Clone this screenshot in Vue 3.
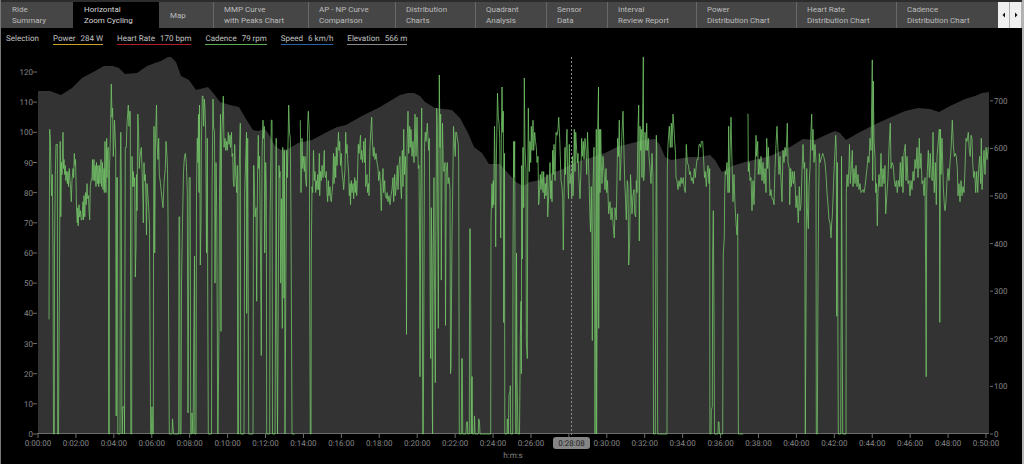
<script setup>
import { ref } from 'vue'

const tabs = [
  { lines: ['Ride', 'Summary'], grow: 61 },
  { lines: ['Horizontal', 'Zoom Cycling'], grow: 75 },
  { lines: ['Map'], grow: 43 },
  { lines: ['MMP Curve', 'with Peaks Chart'], grow: 84 },
  { lines: ['AP - NP Curve', 'Comparison'], grow: 76 },
  { lines: ['Distribution', 'Charts'], grow: 69 },
  { lines: ['Quadrant', 'Analysis'], grow: 60 },
  { lines: ['Sensor', 'Data'], grow: 50 },
  { lines: ['Interval', 'Review Report'], grow: 78 },
  { lines: ['Power', 'Distribution Chart'], grow: 89 },
  { lines: ['Heart Rate', 'Distribution Chart'], grow: 89 },
  { lines: ['Cadence', 'Distribution Chart'], grow: 91 }
]
const active = ref(1)

const metrics = [
  { name: 'Power', value: '284 W', tone: 'power' },
  { name: 'Heart Rate', value: '170 bpm', tone: 'heart' },
  { name: 'Cadence', value: '79 rpm', tone: 'cadence' },
  { name: 'Speed', value: '6 km/h', tone: 'speed' },
  { name: 'Elevation', value: '566 m', tone: 'elevation' }
]

const baseY = 434
const rpmY = v => +(baseY - v * 3.017).toFixed(1)
const leftTicks = Array.from({ length: 13 }, (_, i) => ({ label: i * 10, y: rpmY(i * 10) }))
const rightTicks = Array.from({ length: 8 }, (_, i) => ({ label: i * 100, y: baseY - i * 47.6 }))
const timeTicks = Array.from({ length: 26 }, (_, i) => ({
  label: `0:${String(i * 2).padStart(2, '0')}:00`,
  x: 38 + i * 37.92,
  hidden: i === 14
}))

const elevation = `38,91 50,91 61,95 72,88 82,78 95,71 104,66 113,66 119,68 125,74 137,73 147,66 155,63 161,61
168,57 171,57 176,62 181,76 189,80 196,90 208,87 214,94 220,102 230,105 239,107 246,119 253,130 258,131 265,129
268,133 275,146 281,150 288,149 298,143 312,140 325,133 337,127 346,125 360,117 380,107 400,95 408,93 414,93
420,96 425,102 435,108 452,110 460,118 468,133 474,147 482,153 489,164 500,164 507,172 516,182 523,186 530,182
540,180 550,174 565,168 573,163 590,158 605,153 617,147 632,143 645,140 655,139 660,145 665,157 671,160 690,157
700,157 710,155 715,160 722,172 732,166 745,162 770,156 790,147 803,139 815,140 830,133 835,131 840,133 846,140
860,132 880,122 905,111 918,108 930,109 939,112 950,106 965,99 975,96 982,93 989,92`

/* Cadence samples as "x,rpm"; a slash marks a gap in the recording. */
const cadence = `49,38 49.7,101 50.3,98 51.5,79 52.3,86 53,60 53.5,0 54.3,0 54.5,60 55.3,86 56,96 57.3,96 57.7,0
58.5,0 58.8,20 59.5,52 60.2,97 60.8,72 61.5,90 62,86 63,100 63.5,88 64,91 64.7,86 65.3,89 65.8,84 66.5,87
67.3,83 68,87 68.5,82 69.3,88 70,84 70.7,81 71.3,77 72,84 73,88 73.7,85 74.3,93 75,89 75.5,91 76,84 76.5,75
77.3,70 77.7,75 78.2,69 79,76 79.7,72 80.5,74 81.2,71 82,71 83,77 83.5,71 84,79 84.8,72 85.5,80 86.2,76 87,83
87.7,78 88.5,79 89,74 89.7,71 90.3,82 91,84 92,85 92.5,91 93,84 94,91 94.5,84 95.2,89 96,82 96.5,90 97.5,83
98,89 98.7,82 99.3,89 100,83 101,91 101.5,82 102.5,90 103,81 104,88 104.3,80 105,97 105.5,83 106,80 106.7,98
107,85 107.5,94 108.3,95 108.7,0 109.3,0 109.5,88 110.5,100 111.3,116 112,105 112.6,108 113.3,92 114,98
114.5,104 115,100 115.7,94 116.2,6 116.7,85 117.5,85 117.8,0 120,0 120.3,90 120.8,100 121.3,84 121.8,9 122.3,0
122.7,9 124.3,9 124.5,0 125.3,95 126.3,95 127,103 127.7,106 128.3,109 129,102 129.7,107 130.3,107 130.8,0
131.7,0 132,92 132.7,82 133.3,87 134,82 134.7,85 135.3,52 136,62 136.5,86 137,74 137.8,106 138.5,101 139.3,88
140,92 141.3,95 142,88 143,76 143.3,70 144,90 144.5,84 145.3,86 146,77 146.5,66 147,83 147.7,80 148.7,75
149.5,69 150,35 150.7,0 151.3,0 152,9 152.7,0 153.3,0 153.5,60 154,102 154.7,60 155.5,98 156.5,109 157,97
158,91 158.7,98 159.3,86 160.5,83 161,81 162,78 163,75 164,83 165.3,88 166,97 167,92 167.5,88 168,73 168.7,35
169.3,0 172,0 172.5,5 173.5,0 178.7,0 179,72 179.7,72 180,0 181,0 181.5,50 182.5,70 183.5,87 184.5,92 185.3,93
186.3,90 187.3,80 188,7 188.5,40 189.2,85 190.2,85 190.7,0 191.7,0 192,7 193,0 194.5,59 194.8,0 196,0 196.5,80
197.3,98 198,90 198.5,106 199,80 199.5,109 200.3,56 201,70 201.3,95 202.3,112 203,112 203.7,102 204.3,111
205,108 205.7,100 206.5,60 207.3,98 207.7,50 208.3,0 211.5,0 212,80 213,111 213.5,102 214.5,100 215,50 216,90
216.7,75 217.3,36 217.7,0 218,0 219,37 219.5,80 220.5,106 221,34 221.5,95 222,101 223.3,112 224,95 225,98
225.8,94 226.5,97 227.3,94 228.3,100 229,96 230,99 230.5,95 231.5,100 232,92 232.7,93 233.3,84 234,82 234.7,96
235.5,87 236,84 236.7,80 237.3,89 237.7,0 238.5,0 239,85 240.3,103 240.7,0 244,0 244.7,80 246.5,100 246.7,40
247.7,98 248.3,40 248.7,0 253,0 253.5,89 254,89 255,72 256,75 256.7,44 257.5,85 258.3,99 258.7,88 259.5,92
260.5,60 261.3,26 262,92 263,104 263.5,98 264.3,102 264.7,60 265.7,90 266.3,82 266.7,0 269.7,0 270,70
271.3,104 272,104 272.5,0 275,0 275.8,60 276.2,98 276.7,40 277.5,0 279,89 279.7,85 280,87 280.7,50 281.5,78
282.3,35 282.7,95 283.3,93 284,45 284.5,94 285,0 286,60 286.7,94 287.3,85 288,96 288.7,109 289.5,100 290.3,98
291,70 292,0 294.7,0 / 300.3,104 301,80 302,98 302.7,88 303.3,92 304.3,87 305,92 305.7,84 306.5,82 307.7,103
308.3,107 309.3,100 309.7,50 310.3,0 311,0 311.3,60 312,82 312.7,80 313.5,94 314.3,84 315,87 315.7,80 316.3,84
317,81 317.7,86 318.5,81 319.3,93 319.7,79 320.5,87 321.3,84 322,89 323,85 324.3,94 324.7,86 325.5,85 326.3,87
327,80 327.7,77 328.3,84 329,79 330,82 330.5,78 331.3,77 332,80 332.7,82 333.5,93 334,83 335,92 335.7,85
336.3,95 337,89 338.5,100 339,94 339.7,97 340.5,89 341.3,93 342,87 343,84 343.7,81 345,88 345.7,100 346.3,93
347,96 347.7,91 348.7,86 349.3,79 350,83 350.5,76 351.3,84 352,80 353,83 353.7,78 354.7,85 355.3,80 356,84
356.7,79 357.3,83 358.3,96 359,93 360.5,99 361,91 361.7,94 362.5,90 363.3,93 363.7,97 364.5,90 365.3,98
365.7,82 367,86 367.5,80 368.5,83 369,79 370,95 370.7,100 371.7,105 372.3,98 373.3,92 374,95 375,91 376,93
377,90 378,88 378.7,84 379.7,87 380.5,82 381.3,74 382,82 383,88 383.7,80 384.7,84 385.3,79 386.5,78 387,80
388,77 389,79 390,76 391,79 392,81 393,85 393.7,77 394.7,86 395.3,79 396.3,82 397.3,89 398,81 399,89 400,92
400.7,82 401.5,78 402.3,94 403,82 403.7,101 404.5,86 405.3,92 406,85 406.5,33 407,95 408,107 408.7,93 409.7,102
410.3,95 411,101 412,92 413,97 414,90 415,106 416,92 417,105 417.7,95 418.3,88 419,89 419.7,55 420,19 420.7,75
421.7,108 422.3,60 422.7,0 423.3,0 424,55 424.5,95 425.3,100 426,97 427.3,103 428,98 428.7,94 429.3,98 429.7,80
430.3,37 430.7,25 431.3,75 432,55 432.3,8 432.6,0 433,55 434,85 434.3,55 434.7,46 435.3,17 435.7,60 436.7,108
437.3,102 438.3,35 439.3,119 440,95 440.7,106 441.3,51 441.7,75 442.5,103 443.3,88 444,87 445,90 445.5,36
446.3,87 447.3,90 448,83 449,85 450,81 450.5,20 451,22 452,65 452.7,80 453.5,102 454.3,97 455.3,92 455.7,100
456.5,100 457.3,98 458.3,96 458.7,90 459,45 459.3,0 461.3,0 461.7,25 462.3,25 462.7,0 466,0 466.5,4 467.5,4
467.7,0 469.3,0 469.7,68 470.3,68 470.7,44 471.3,0 471.7,19 472.3,19 472.5,0 474,0 474.5,6 475,0 478.3,0
478.7,5 479.5,4 480,0 490.7,0 491,70 492,83 492.7,75 493.3,84 493.7,76 494.5,102 495,92 495.7,62 496.3,90
497.5,113 498.3,105 499,103 499.7,98 500.7,65 501.3,98 502,115 502.7,100 503.3,107 503.7,37 504.5,93 504.8,0
507,0 507.3,5 508.3,0 509,13 510,14 510.3,16 510.7,0 512.7,0 513,60 513.7,97 514,85 514.7,97 515.3,25 516,0
516.5,60 517,19 518,0 519.5,0 520,19 520.3,32 521,44 521.3,20 521.7,89 522.3,58 523,95 523.7,75 524.3,118
525,95 526,87 526.3,31 527.3,25 527.7,80 528.3,108 529.3,87 530,97 530.7,90 531.3,102 532,94 533,104 533.7,94
534.7,100 535.5,97 536.3,95 537,90 538,92 538.7,76 539.5,80 540.3,86 541,81 542,87 543,80 543.7,87 544.5,78
545.3,83 546,79 547,86 547.7,72 548.3,76 549,82 550,90 550.7,78 551.3,84 552,77 552.7,94 553.3,86 554,96
555,84 556,100 557,99 558,101 558.7,105 559.7,98 560.3,92 561,84 562,82 562.7,78 563.3,61 564,78 565,95
565.5,86 566.3,96 567,101 567.7,85 568.5,78 569.3,96 570,83 571,86 571.7,78 572.5,92 573,79 573.7,86 574.3,101
575,87 575.7,100 576.7,94 577.3,90 578,93 579,84 580,78 581,88 581.7,98 582.3,92 583.3,97 584,91 585,98 586,94
586.7,86 587.5,100 588.3,92 589,85 589.7,75 590.5,67 591.3,82 592,65 592.3,31 593,82 594,95 594.7,40 595,0
595.7,60 596.3,101 596.6,0 597.3,60 597.7,101 598.5,115 598.7,35 599.3,101 600,80 600.7,101 601.3,90 602,83
603,92 604,87 605,81 606,88 606.7,80 607.5,84 608.7,73 610,77 611,71 612,75 613,70 613.7,67 614.3,65 615,75
616.3,71 617,85 617.7,98 618.5,92 619.3,104 620,84 621,91 622,100 623,107 624,93 624.7,84 625.5,78 626.3,71
627.3,84 628,82 628.7,56 629.7,64 630.5,86 631.3,80 632,73 633,79 634,81 634.7,73 635.7,72 636.3,84 637,80
638,101 638.7,109 639.3,64 640,102 640.7,94 641.3,101 642,85 643.3,125 643.7,84 644.3,87 645,100 646,94
646.7,103 647.3,94 648.3,98 649,92 650,88 651,83 652,93 653,85 653.5,0 655.3,0 655.7,50 656.3,99 656.7,95
657.3,40 657.7,0 667,0 667.3,88 668,96 669.3,102 670.3,95 671.3,103 672,95 673,106 674,101 674.7,97 675.5,93
676,85 677,84 678,81 679,84 680,82 681,85 682,83 683.3,85 684,82 685.3,80 686.3,96 687.3,90 688.5,89 689.5,86
690.3,87 691.3,84 692.3,85 693.3,83 694.3,88 695.3,85 696,88 697,91 698,91 699,96 700,96 700.7,95 701.3,97
702.7,97 703.3,93 704.5,85 705.3,87 706.3,82 707,86 708,89 709,83 709.7,88 709.9,0 711,0 711.3,8 712.3,9
712.7,60 713.3,74 714,40 714.5,0 718,0 718.3,4 719,4 719.5,0 722.7,0 723,35 723.3,60 724.3,65 724.7,80
725.3,87 726,86 727,90 728,80 728.7,102 729.3,80 730,92 731,105 732,90 733,77 734,86 735,76 736,70 737,66
737.7,73 738,35 738.4,0 743.3,0 / 747.3,106 748,106 748.3,87 749,90 750,84 751,85 752,74 753,84 754,76 755,87
756,99 756.7,92 757.7,97 758.3,86 759.3,91 760,86 761,92 762,84 763,90 764,83 765,88 766,80 766.7,98 767.7,88
768.3,95 769.3,87 770,79 771,81 772,78 773,78 774,76 775,88 776,96 777,102 778,94 779,86 780,92 781,84 782,77
783,94 784,90 785,95 786,92 787.3,103 788,90 789.3,88 789.7,76 790.7,88 791.3,82 792.3,87 793.3,83 794.3,87
795.3,81 796,75 797,79 798.3,70 799.3,82 800,74 801,76 802,87 803,96 804,88 804.7,90 805.3,0 806.3,60 806.7,88
807.3,75 808.3,68 809,82 810,88 810.7,98 811.7,106 812.3,94 813,101 814,90 815,96 816,90 816.3,0 817.3,0
818,50 818.7,80 819.3,93 820,90 821,91 822.7,93 823.7,92 825,90 826,86 827,80 828,76 829,71 830,70 831,65
831.7,70 832.3,72 833,78 834,87 835,94 835.7,99 836.3,94 836.7,39 837.3,90 838.3,0 840.7,0 841.3,50 841.5,92
842,60 842.7,0 846,0 846.3,80 847,86 848,82 849,89 849.5,96 850.3,83 851.3,88 852.3,94 853,82 854,88 855,83
856,89 857,82 858,86 859,81 860,83 861,80 863,81 864,80 865,82 866,85 867,88 868,92 869,90 870,98 871,94
872.3,124 872.7,84 873.3,117 874,97 875,92 875.7,80 876.5,83 877.3,69 878,80 879,86 880,82 881,93 882,82
883,88 884,83 885,89 885.7,73 887,80 888,85 889,95 890.3,103 891,88 892,90 893.3,89 894.3,84 895.3,82 896.3,84
897.3,80 898.3,84 899.3,82 900.3,90 901.3,82 902.3,92 903,80 904,93 905.3,96 906,84 907,92 908,83 909,84
910,79 911,84 912,81 913,87 914,84 915,91 916,88 917,95 918,85 919.3,98 920,88 921,93 922,83 923,84 924,79
925,85 925.7,52 926.2,19 926.7,80 927.3,87 928.3,94 929.3,85 930.3,93 931.3,85 932.3,84 933,100 933.7,85
934.3,80 935.3,90 936.3,76 937,92 938,96 939.3,101 939.8,37 940.5,101 941,86 942,98 942.7,90 943.3,82 944.3,76
945,74 946,77 947,84 948,88 949,84 950,90 951,94 952.3,104 953.3,96 954.3,92 955.3,93 956.3,92 957.3,88 958,79
959,83 960,77 961,84 962,79 963,82 964,80 965,88 966,98 967,97 968.3,100 969.3,94 970.3,92 971,99 972,98
972.7,90 973.7,85 974.7,87 975.7,80 976.7,87 977.7,80 978.7,88 979.7,92 980.7,83 981.3,98 982,81 983,88 984,94
985,86 986,95 987,91 988.3,95`

const cadenceRuns = cadence.split('/').map(run =>
  run
    .trim()
    .split(/\s+/)
    .map(pair => {
      const [x, v] = pair.split(',').map(Number)
      return `${x},${rpmY(v)}`
    })
    .join(' ')
)
</script>

<template>
  <main class="window">
    <header class="tabbar">
      <nav class="tabs" aria-label="Charts">
        <button
          v-for="(tab, i) in tabs"
          :key="i"
          type="button"
          class="tab"
          :class="{ active: i === active }"
          :style="{ flexGrow: tab.grow }"
          @click="active = i"
        >
          <span v-for="line in tab.lines" :key="line" class="line">{{ line }}</span>
        </button>
      </nav>
      <button type="button" class="scroll" aria-label="Scroll tabs left">
        <svg class="arrow" viewBox="0 0 4 6"><path d="M3 0.5V5.5L0.5 3Z" /></svg>
      </button>
      <button type="button" class="scroll" aria-label="Scroll tabs right">
        <svg class="arrow" viewBox="0 0 4 6"><path d="M1 0.5V5.5L3.5 3Z" /></svg>
      </button>
    </header>

    <section class="legend">
      <span class="selection">Selection</span>
      <span v-for="m in metrics" :key="m.name" class="metric" :class="m.tone">
        <span>{{ m.name }}</span>
        <span>{{ m.value }}</span>
      </span>
    </section>

    <svg class="chart" viewBox="1 48 1021 416" role="img" aria-label="Cadence and elevation over time">
      <polygon class="elev" :points="`38,434 ${elevation} 989,434`" />
      <path class="axis" d="M37 433.5H989" />
      <g v-for="t in leftTicks" :key="'l' + t.label">
        <path class="axis" :d="`M33 ${t.y}H37`" />
        <text class="label end" x="33" :y="t.y + 3">{{ t.label }}</text>
      </g>
      <g v-for="t in rightTicks" :key="'r' + t.label">
        <path class="axis" :d="`M990 ${t.y}H993`" />
        <text class="label" x="994" :y="t.y + 3">{{ t.label }}</text>
      </g>
      <g v-for="t in timeTicks" :key="t.label">
        <path class="axis" :d="`M${t.x} 434V438`" />
        <text v-if="!t.hidden" class="label mid" :x="t.x" y="446">{{ t.label }}</text>
      </g>
      <text class="label mid" x="513" y="458">h:m:s</text>
      <polyline v-for="(run, i) in cadenceRuns" :key="i" class="cad" :points="run" />
      <path class="cursor" d="M571.5 57V436" />
      <rect class="badge" x="553" y="437" width="37" height="12" rx="3" />
      <text class="badge-text" x="571.5" y="446">0:28:08</text>
    </svg>
  </main>
</template>

<style>
body {
  background: #000;
}
</style>

<style scoped>
.window {
  box-sizing: border-box;
  min-height: 100vh;
  background: #000;
  border-left: 1px solid #777;
  border-right: 2px solid #b4b4b4;
  font-family: Roboto, "Open Sans", sans-serif;
  font-size: 8px;
  line-height: 11px;
  color: #c0c0c0;
  text-rendering: geometricPrecision;
}
.tabbar {
  display: flex;
  height: 28px;
  box-sizing: border-box;
  border-top: 2px solid #2c2c2c;
  background: #464646;
}
.tabs {
  display: flex;
  flex: 1;
  min-width: 0;
}
.tab {
  flex: 1 1 0;
  min-width: 0;
  box-sizing: border-box;
  display: flex;
  flex-direction: column;
  justify-content: center;
  align-items: flex-start;
  padding: 0 0 0 10px;
  border: 0;
  border-left: 1px solid #686868;
  background: #464646;
  color: #bcbcbc;
  font: inherit;
  white-space: nowrap;
}
.tab:first-child,
.tab.active,
.tab.active + .tab {
  border-left-color: transparent;
}
.tab.active {
  background: #000;
  color: #d8d8d8;
}
.scroll {
  flex: none;
  width: 12px;
  padding: 0;
  border: 0;
  border-right: 1px solid #b0b0b0;
  background: #f0f0f0;
  display: flex;
  align-items: center;
  justify-content: center;
}
.arrow {
  width: 4px;
  height: 6px;
  fill: #111;
}
.legend {
  display: flex;
  align-items: flex-start;
  gap: 14px;
  height: 20px;
  box-sizing: border-box;
  padding: 5px 5px 0;
}
.metric {
  display: flex;
  gap: 5px;
  border-bottom: 1px solid;
  color: #c0c0c0;
}
.power { border-bottom-color: #c9a227; }
.heart { border-bottom-color: #b3202c; }
.cadence { border-bottom-color: #5fae55; }
.speed { border-bottom-color: #2b62a8; }
.elevation { border-bottom-color: #8a8a8a; }
.chart {
  display: block;
  width: 100%;
  height: auto;
}
.elev { fill: #333; }
.axis {
  fill: none;
  stroke: #6c6c6c;
  stroke-width: 1;
}
.label {
  fill: #858585;
  font-size: 8px;
}
.end { text-anchor: end; }
.mid { text-anchor: middle; }
.cad {
  fill: none;
  stroke: #74c468;
  stroke-width: 0.8;
  stroke-linejoin: round;
}
.cursor {
  fill: none;
  stroke: #8c8c8c;
  stroke-width: 1;
  stroke-dasharray: 2 2;
}
.badge { fill: #858585; }
.badge-text {
  fill: #222;
  font-size: 8px;
  text-anchor: middle;
}
</style>
